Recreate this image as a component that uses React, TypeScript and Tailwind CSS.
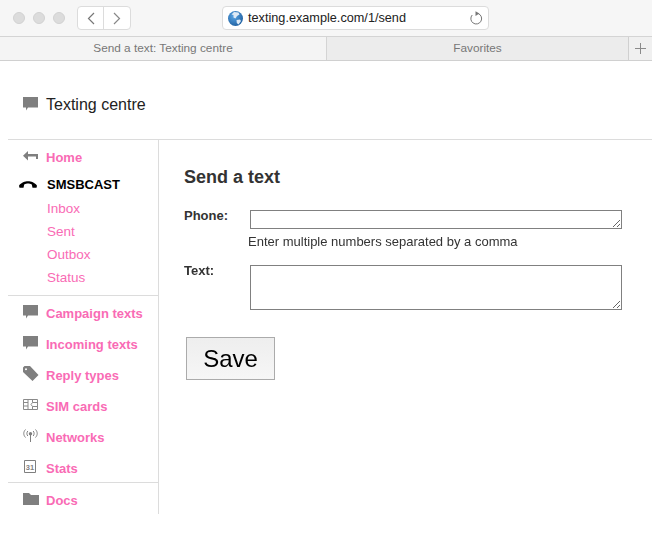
import React from "react";

const Bubble = () => (
  <svg width="15" height="14" viewBox="0 0 15 14" className="block"><path d="M0 0H15V10.5H5L3 13.5V10.5H0Z" fill="#7f7f7f" /></svg>
);
const Back = () => (
  <svg width="15" height="11" viewBox="0 0 15 11" className="block"><path d="M5 0V3H15V8H13V5.5H5V9.5L0 4.7Z" fill="#7f7f7f" /></svg>
);
const Phone = () => (
  <svg width="18" height="7" viewBox="0 0 18 7" className="block"><path d="M0 4.8C2 1.5 6 .3 9 .3S16 1.5 18 4.8L17.5 6.8H13.5L12.8 3.6C11.5 2.6 10.2 2.4 9 2.4S6.5 2.6 5.2 3.6L4.5 6.8H.5Z" fill="#000" /></svg>
);
const Tag = () => (
  <svg width="16" height="16" viewBox="0 0 16 16" className="block"><path fillRule="evenodd" d="M0 1.5 1.5 0H7L15.5 9 9.5 15 0 6ZM3 2.2A1 1 0 1 0 3 4.2 1 1 0 1 0 3 2.2Z" fill="#7f7f7f" /></svg>
);
const Sim = () => (
  <svg width="15" height="11" viewBox="0 0 15 11" fill="none" stroke="#8a8a8a" className="block"><path d="M.5.5H14.5V10.5H.5ZM.5 3.5H5M.5 7H5M5 .5V10.5H9.5V7.5L8 5.5 9.5 3.5V.5M9.5 3.5H14.5M9.5 7.5H14.5" /></svg>
);
const Antenna = () => (
  <svg width="15" height="13" viewBox="0 0 15 13" fill="none" stroke="#7f7f7f" className="block"><circle cx="7.5" cy="4.7" r="1.7" fill="#7f7f7f" stroke="none" /><path d="M7.5 5V13M4.8 2C3.6 3.5 3.6 5.5 4.8 7M10.2 2C11.4 3.5 11.4 5.5 10.2 7M2.5 .5C.2 3 .2 6 2.5 8.5M12.5 .5C14.8 3 14.8 6 12.5 8.5" /></svg>
);
const Calendar = () => (
  <svg width="12" height="13" viewBox="0 0 12 13" className="block ml-[1px]">
    <path d="M.5.5H11.5V12.5H.5Z" fill="none" stroke="#7f7f7f" />
    <text x="6" y="9.8" textAnchor="middle" fontSize="7.5" fontWeight="700" fill="#7f7f7f" fontFamily="'Liberation Sans',sans-serif">31</text>
  </svg>
);
const Folder = () => (
  <svg width="16" height="12" viewBox="0 0 16 12" className="block"><path d="M0 0H6L8 2H16V12H0Z" fill="#7f7f7f" /></svg>
);
const Globe = () => (
  <svg width="15" height="15" viewBox="0 0 15 15" className="block">
    <defs>
      <radialGradient id="g" cx="0.4" cy="0.35" r="0.7">
        <stop offset="0" stopColor="#5aa6e6" />
        <stop offset="1" stopColor="#1f5f9f" />
      </radialGradient>
    </defs>
    <circle cx="7.5" cy="7.5" r="7.5" fill="url(#g)" />
    <path d="M6 1 10.5 1.5 11.5 3.5 9 5 7.5 7.5 5.5 6.5 5.5 4 3.5 3.5ZM8.5 9 12 8.5 13 10 10.5 13.5 8.8 12Z" fill="#dfeaf5" />
  </svg>
);

type ItemProps = { icon: React.ReactNode; label: string; h: string };
const NavItem = ({ icon, label, h }: ItemProps) => (
  <a className={`flex items-start pl-[15px] font-bold text-[13px] leading-[15px] text-[#f96bb5] ${h}`}>
    <span className="w-[23px] h-[15px] shrink-0 flex items-center">{icon}</span>
    <span className="pt-[2px]">{label}</span>
  </a>
);

export default function App() {
  return (
    <div className="w-[652px] h-[536px] bg-white overflow-hidden font-['Liberation_Sans',Arial,sans-serif] text-[#333]">
      <div className="h-[37px] bg-[#f6f6f6] border-b border-[#d4d4d4] flex items-center relative">
        <div className="flex gap-[8px] ml-[13px] w-[64px]">
          <span className="w-[12px] h-[12px] rounded-full bg-[#dcdcdc] border border-[#d2d2d2]" />
          <span className="w-[12px] h-[12px] rounded-full bg-[#dcdcdc] border border-[#d2d2d2]" />
          <span className="w-[12px] h-[12px] rounded-full bg-[#dcdcdc] border border-[#d2d2d2]" />
        </div>
        <div className="flex h-[24px] bg-white border border-[#dcdcdc] rounded-[4px]">
          <span className="w-[26px] flex items-center justify-center border-r border-[#dcdcdc]">
            <svg width="8" height="13" viewBox="0 0 8 13" fill="none" stroke="#777" strokeWidth="1.2"><path d="M7 1 1.5 6.5 7 12" /></svg>
          </span>
          <span className="w-[26px] flex items-center justify-center">
            <svg width="8" height="13" viewBox="0 0 8 13" fill="none" stroke="#888" strokeWidth="1.2"><path d="M1 1 6.5 6.5 1 12" /></svg>
          </span>
        </div>
        <div className="ml-[91px] w-[267px] h-[24px] bg-white border border-[#dcdcdc] rounded-[4px] flex items-center pl-[5px] pr-[5px]">
          <Globe />
          <span className="ml-[5px] flex-1 text-[12.7px] text-[#222] leading-none">texting.example.com/1/send</span>
          <svg width="14" height="16" viewBox="0 0 14 16" fill="none" stroke="#777"><path d="M9.3 3.6A5.4 5.4 0 1 1 3.2 5" /><path d="M6.5 1.2 10.4 3.6 6.5 6Z" fill="#777" stroke="none" /></svg>
        </div>
      </div>
      <div className="h-[24px] flex bg-[#ececec] border-b border-[#d0d0d0] text-[11.8px] text-[#777] leading-none">
        <div className="w-[327px] bg-[#f4f4f4] border-r border-[#d4d4d4] flex items-center justify-center">Send a text: Texting centre</div>
        <div className="flex-1 flex items-center justify-center border-r border-[#d0d0d0]">Favorites</div>
        <div className="w-[23px] flex items-center justify-center bg-[#f0f0f0]">
          <svg width="11" height="11" viewBox="0 0 11 11" stroke="#8a8a8a"><path d="M5.5 0V11M0 5.5H11" /></svg>
        </div>
      </div>

      <div className="h-[78px] flex items-start pl-[23px] pt-[35px]">
        <span className="w-[23px] pt-[1px]"><Bubble /></span>
        <span className="text-[16px] leading-[18px] text-[#222]">Texting centre</span>
      </div>

      <div className="ml-[8px] flex border-t border-[#dcdcdc] h-[375px]">
        <nav className="w-[151px] shrink-0 border-r border-[#dcdcdc] pt-[9px]">
          <div className="h-[28px] flex items-start pl-[15px] font-bold text-[13px] leading-[15px] text-[#f96bb5]">
            <span className="w-[23px] h-[15px] shrink-0 flex items-center"><Back /></span>
            <span className="pt-[1px]">Home</span>
          </div>
          <div className="flex items-center h-[15px] pl-[11px] font-bold text-[13px] text-black">
            <span className="w-[28px]"><Phone /></span>
            SMSBCAST
          </div>
          <ul className="pl-[39px] text-[13.5px] leading-[23px] text-[#f96bb5] pt-[5px]">
            <li>Inbox</li>
            <li>Sent</li>
            <li>Outbox</li>
            <li>Status</li>
          </ul>
          <div className="border-t border-[#dcdcdc] mt-[6px] pt-[8px] h-[187px]">
            <NavItem icon={<Bubble />} label="Campaign texts" h="h-[31px]" />
            <NavItem icon={<Bubble />} label="Incoming texts" h="h-[31px]" />
            <NavItem icon={<Tag />} label="Reply types" h="h-[31px]" />
            <NavItem icon={<Sim />} label="SIM cards" h="h-[31px]" />
            <NavItem icon={<Antenna />} label="Networks" h="h-[31px]" />
            <NavItem icon={<Calendar />} label="Stats" h="h-[22px]" />
          </div>
          <div className="border-t border-[#dcdcdc] pt-[8px]">
            <NavItem icon={<Folder />} label="Docs" h="h-[22px]" />
          </div>
        </nav>
        <main className="pl-[25px] pt-[27px] flex-1 text-black">
          <h1 className="font-bold text-[18px] leading-[20px] text-[#333]">Send a text</h1>
          <div className="flex mt-[23px]">
            <label className="w-[66px] -mt-[2px] font-bold text-[13px] leading-[15px] text-[#333]">Phone:</label>
            <textarea className="block w-[372px] h-[19px] bg-white border border-[#808080] resize-y outline-none" />
          </div>
          <p className="ml-[64px] mt-[5px] text-[13px] leading-[16px] text-[#333]">Enter multiple numbers separated by a comma</p>
          <div className="flex mt-[15px]">
            <label className="w-[66px] -mt-[2px] font-bold text-[13px] leading-[15px] text-[#333]">Text:</label>
            <textarea className="block w-[372px] h-[45px] bg-white border border-[#808080] resize-y outline-none" />
          </div>
          <button className="block ml-[2px] mt-[27px] w-[89px] h-[43px] border border-[#ababab] bg-[linear-gradient(#eeeeee,#f6f6f6)] text-[24px] leading-none text-black">Save</button>
        </main>
      </div>
    </div>
  );
}
